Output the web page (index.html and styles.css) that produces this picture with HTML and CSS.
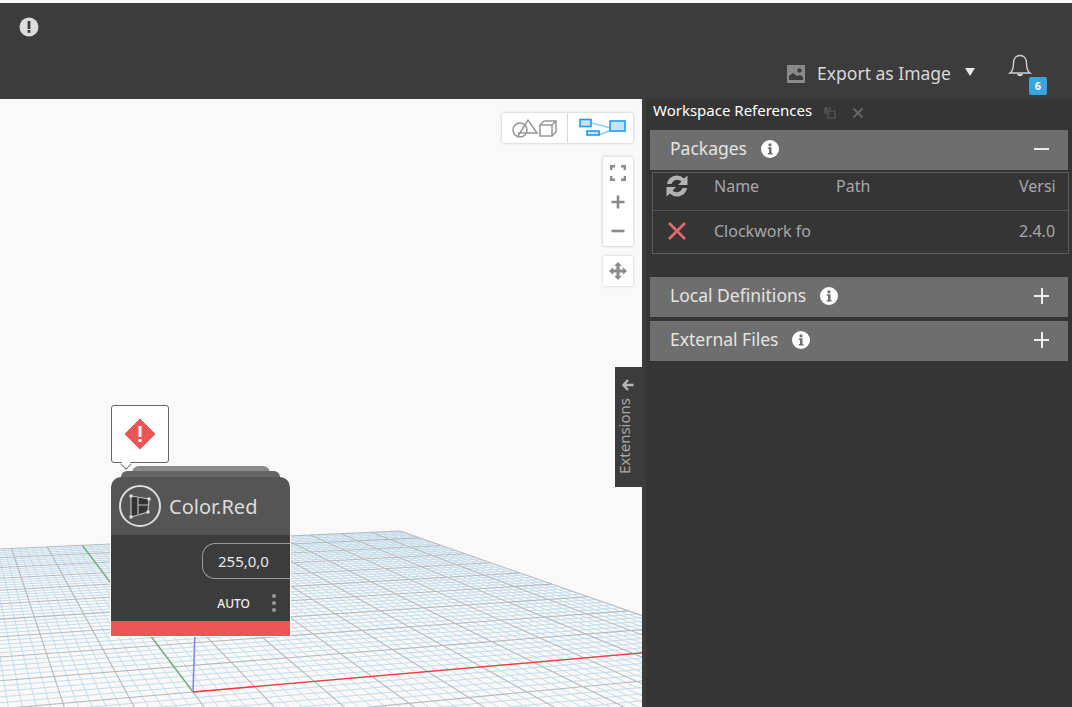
FILE: index.html
```html
<!DOCTYPE html>
<html lang="en">
  <head>
    <meta charset="UTF-8" />
    <title>Workspace References</title>
    <link rel="stylesheet" href="styles.css">
  </head>
  <body>
    <div class="app">
      <header class="topbar">
        <svg class="alert" width="20" height="20" viewBox="0 0 20 20">
          <circle cx="10" cy="10" r="9.5" fill="#dcdcdc" />
          <rect x="8.6" y="4" width="2.8" height="8" fill="#3c3c3c" />
          <rect x="8.6" y="13" width="2.8" height="2.8" fill="#3c3c3c" />
        </svg>
        <div class="actions">
          <svg class="export-icon" width="18" height="18" viewBox="0 0 18 18">
            <rect width="18" height="18" fill="#8a8a8a" />
            <circle cx="12.5" cy="5.5" r="2.2" fill="#3c3c3c" />
            <path d="M2 15 L2 11 L6 8 L10 11 L13 10 L16 12 L16 15 Z" fill="#3c3c3c" />
          </svg>
          <span class="export-text">Export as Image</span>
          <span class="caret"></span>
          <div class="bell">
            <svg width="24" height="26" viewBox="0 0 24 26">
              <path d="M2 20 C5 18 5.500 15 5.500 10 C5.500 5 8.500 2.500 12 2.500 C15.500 2.500 18.500 5 18.500 10 C18.500 15 19 18 22 20 Z" fill="none" stroke="#cfcfcf" stroke-width="1.400" />
              <path d="M9 21 C9.500 24 14.500 24 15 21 Z" fill="#cfcfcf" />
            </svg>
            <span class="badge">6</span>
          </div>
        </div>
      </header>

      <main class="main">
        <section class="canvas">
          <svg id="grid" class="grid" width="642" height="608"></svg>

          <div class="view-toggle">
            <button class="toggle-btn">
              <svg width="50" height="20" viewBox="0 0 50 20">
                <circle cx="10" cy="12" r="7" fill="none" stroke="#969696" stroke-width="1.500" />
                <path d="M8 18 L18 2 L27 15 L8 15" fill="none" stroke="#969696" stroke-width="1.500" />
                <path d="M30 7 H42 V18 H30 Z M30 7 L34 3 H46 V14 L42 18 M42 7 L46 3" fill="none" stroke="#969696" stroke-width="1.500" />
              </svg>
            </button>
            <button class="toggle-btn graph-btn">
              <svg width="48" height="20" viewBox="0 0 48 20">
                <path d="M12 5 L32 10 M20 17 L32 12" stroke="#8fcdf7" stroke-width="1.500" />
                <rect x="1" y="1.500" width="11" height="7" fill="#c5e3fb" stroke="#1e9cf5" stroke-width="1.600" />
                <rect x="8" y="13" width="12" height="4" fill="#c5e3fb" stroke="#1e9cf5" stroke-width="1.600" />
                <rect x="31" y="3" width="15" height="10" fill="#c5e3fb" stroke="#1e9cf5" stroke-width="1.600" />
              </svg>
            </button>
          </div>

          <div class="zoom-box">
            <button class="tool-btn">
              <svg width="16" height="16" viewBox="0 0 16 16">
                <path d="M1.200 5 V1.200 H5 M11 1.200 H14.800 V5 M14.800 11 V14.800 H11 M5 14.800 H1.200 V11" fill="none" stroke="#8a8a8a" stroke-width="2.400" />
              </svg>
            </button>
            <button class="tool-btn">
              <svg width="14" height="14" viewBox="0 0 14 14">
                <path d="M7 0.500 V13.500 M0.500 7 H13.500" stroke="#8a8a8a" stroke-width="2.600" />
              </svg>
            </button>
            <button class="tool-btn">
              <svg width="14" height="14" viewBox="0 0 14 14">
                <path d="M0.500 7 H13.500" stroke="#8a8a8a" stroke-width="2.600" />
              </svg>
            </button>
          </div>

          <div class="pan-box">
            <svg width="18" height="18" viewBox="0 0 18 18">
              <path d="M9 0 L12.800 4 H10.600 V7.400 H14 V5.200 L18 9 L14 12.800 V10.600 H10.600 V14 H12.800 L9 18 L5.200 14 H7.400 V10.600 H4 V12.800 L0 9 L4 5.200 V7.400 H7.400 V4 H5.200 Z" fill="#8a8a8a" />
            </svg>
          </div>

          <div class="warning">
            <svg width="32" height="32" viewBox="0 0 32 32">
              <path d="M16 1 L31 16 L16 31 L1 16 Z" fill="#eb5555" stroke="#eb5555" stroke-linejoin="round" />
              <rect x="14.500" y="8" width="3" height="11" fill="#fff" />
              <rect x="14.500" y="21" width="3" height="3" fill="#fff" />
            </svg>
          </div>

          <div class="node">
            <div class="node-stack stack-back"></div>
            <div class="node-stack stack-mid"></div>
            <div class="node-head">
              <svg width="44" height="44" viewBox="0 0 44 44">
                <circle cx="22" cy="22" r="20" fill="none" stroke="#dcdcdc" stroke-width="2" />
                <path d="M13 12 L31 15 L30 28 L13 33 Z" fill="#333" stroke="#bdbdbd" stroke-width="1.200" />
                <path d="M20 14 V30 M20 21 H30" fill="none" stroke="#bdbdbd" stroke-width="1.200" />
                <circle cx="13" cy="12" r="1.800" fill="#dcdcdc" />
                <circle cx="31" cy="15" r="1.800" fill="#dcdcdc" />
                <circle cx="30" cy="28" r="1.800" fill="#dcdcdc" />
                <circle cx="13" cy="33" r="1.800" fill="#dcdcdc" />
              </svg>
              <span class="node-name">Color.Red</span>
            </div>
            <div class="node-body">
              <div class="node-value">255,0,0</div>
              <div class="node-foot">
                <span class="node-auto">AUTO</span>
                <span class="node-dots"><i></i><i></i><i></i></span>
              </div>
            </div>
            <div class="node-state"></div>
          </div>

          <div class="ext-tab">
            <svg width="12" height="12" viewBox="0 0 12 12">
              <path d="M6 1 L1.500 6 L6 11 M2 6 H11.500" fill="none" stroke="#b5b5b5" stroke-width="2.400" />
            </svg>
            <span class="ext-label">Extensions</span>
          </div>
        </section>

        <aside class="sidebar">
          <div class="side-title">
            <span class="side-name">Workspace References</span>
            <svg width="12" height="12" viewBox="0 0 12 12">
              <path d="M1 1 H6 V3 M1 1 V6 H3 M4 4 H11 V11 H4 Z M1 1 L5 5" fill="none" stroke="#5c5c5c" stroke-width="1.200" />
            </svg>
            <svg width="12" height="12" viewBox="0 0 12 12">
              <path d="M1.500 1.500 L10.500 10.500 M10.500 1.500 L1.500 10.500" stroke="#666" stroke-width="2" />
            </svg>
          </div>

          <div class="section-head">
            <span class="section-name">Packages</span>
            <svg class="info" width="18" height="18" viewBox="0 0 18 18">
              <circle cx="9" cy="9" r="9" fill="#fff" />
              <circle cx="9" cy="4.800" r="1.600" fill="#6e6e6e" />
              <path d="M6.800 7.300 H10.500 V13 H11.500 V14.500 H6.800 V13 H8 V8.800 H6.800 Z" fill="#6e6e6e" />
            </svg>
            <span class="toggle-sign minus"></span>
          </div>

          <div class="pkg-table">
            <div class="pkg-row pkg-header">
              <span class="pkg-icon">
                <svg width="24" height="24" viewBox="0 0 24 24">
                  <path d="M2 10 A10 10 0 0 1 19 4.500 L22.500 1.500 V11 H13 L16.500 7.500 A6 6 0 0 0 6.500 10 Z" fill="#b3b3b3" />
                  <path d="M22 14 A10 10 0 0 1 5 19.500 L1.500 22.500 V13 H11 L7.500 16.500 A6 6 0 0 0 17.500 14 Z" fill="#b3b3b3" />
                </svg>
              </span>
              <span class="pkg-name">Name</span>
              <span class="pkg-path">Path</span>
              <span class="pkg-version">Versi</span>
            </div>
            <div class="pkg-row pkg-item">
              <span class="pkg-icon">
                <svg width="20" height="20" viewBox="0 0 20 20">
                  <path d="M2 2 L18 18 M18 2 L2 18" stroke="#e06a6a" stroke-width="2.800" />
                </svg>
              </span>
              <span class="pkg-name">Clockwork fo</span>
              <span class="pkg-path"></span>
              <span class="pkg-version">2.4.0</span>
            </div>
          </div>

          <div class="section-head section-gap">
            <span class="section-name">Local Definitions</span>
            <svg class="info" width="18" height="18" viewBox="0 0 18 18">
              <circle cx="9" cy="9" r="9" fill="#fff" />
              <circle cx="9" cy="4.800" r="1.600" fill="#6e6e6e" />
              <path d="M6.800 7.300 H10.500 V13 H11.500 V14.500 H6.800 V13 H8 V8.800 H6.800 Z" fill="#6e6e6e" />
            </svg>
            <span class="toggle-sign plus"></span>
          </div>
          <div class="section-head">
            <span class="section-name">External Files</span>
            <svg class="info" width="18" height="18" viewBox="0 0 18 18">
              <circle cx="9" cy="9" r="9" fill="#fff" />
              <circle cx="9" cy="4.800" r="1.600" fill="#6e6e6e" />
              <path d="M6.800 7.300 H10.500 V13 H11.500 V14.500 H6.800 V13 H8 V8.800 H6.800 Z" fill="#6e6e6e" />
            </svg>
            <span class="toggle-sign plus"></span>
          </div>
        </aside>
      </main>
    </div>
    <script src="grid.js"></script>
  </body>
</html>
```

FILE: styles.css
```css
* {
  box-sizing: border-box;
}
html,
body {
  margin: 0;
  height: 100%;
  overflow: hidden;
}
body {
  background: #f9f9f9;
  font-family: "Noto Sans", "Open Sans", sans-serif;
}
.app {
  display: flex;
  flex-direction: column;
  height: 707px;
  padding-top: 3px;
}
.topbar {
  height: 96px;
  background: #3c3c3c;
  display: flex;
  justify-content: space-between;
  flex-shrink: 0;
}
.alert {
  margin: 14px 0 0 19px;
}
.actions {
  align-self: flex-start;
  display: flex;
  align-items: center;
  margin-top: 50px;
  margin-right: 21px;
  height: 40px;
}
.export-icon {
  margin-top: 2px;
  margin-right: 12px;
}
.export-text {
  font-size: 17.5px;
  color: #d8d8d8;
}
.caret {
  width: 0;
  height: 0;
  margin: 0 33px 2px 14px;
  border-left: 5px solid transparent;
  border-right: 5px solid transparent;
  border-top: 8px solid #e8e8e8;
}
.bell {
  position: relative;
  width: 43px;
  height: 40px;
}
.bell svg {
  display: block;
}
.badge {
  position: absolute;
  left: 21px;
  top: 24px;
  width: 18px;
  height: 18px;
  border-radius: 2px;
  background: #38a5dc;
  color: #fff;
  font-size: 11px;
  font-weight: 700;
  line-height: 18px;
  text-align: center;
}
.main {
  flex: 1;
  display: flex;
  min-height: 0;
}
.canvas {
  position: relative;
  width: 642px;
  flex-shrink: 0;
  background: #f9f9f9;
  overflow: hidden;
}
.grid {
  position: absolute;
  left: 0;
  top: 0;
}
.view-toggle {
  position: absolute;
  top: 14px;
  right: 9px;
  display: flex;
  width: 131px;
  height: 30px;
  background: #fff;
  border-radius: 2px;
  box-shadow: 0 0 3px rgba(0, 0, 0, 0.25);
}
.toggle-btn {
  width: 65px;
  flex: none;
  border: 0;
  padding: 0;
  background: none;
  display: flex;
  align-items: center;
  justify-content: center;
}
.toggle-btn + .toggle-btn {
  width: 66px;
  border-left: 1px solid #d4d4d4;
}
.graph-btn {
  padding-left: 4px;
}
.zoom-box {
  position: absolute;
  top: 58px;
  right: 9px;
  width: 30px;
  height: 89px;
  background: #fff;
  border-radius: 2px;
  box-shadow: 0 0 3px rgba(0, 0, 0, 0.25);
  display: flex;
  flex-direction: column;
  padding: 1px 0;
}
.tool-btn {
  flex: 1;
  border: 0;
  padding: 0;
  background: none;
  display: flex;
  align-items: center;
  justify-content: center;
}
.pan-box {
  position: absolute;
  top: 157px;
  right: 9px;
  width: 30px;
  height: 30px;
  background: #fff;
  border-radius: 2px;
  box-shadow: 0 0 3px rgba(0, 0, 0, 0.2);
  display: flex;
  align-items: center;
  justify-content: center;
}
.warning {
  position: absolute;
  left: 111px;
  top: 306px;
  width: 58px;
  height: 58px;
  background: #fff;
  border: 1px solid #666;
  border-radius: 3px;
  display: flex;
  align-items: center;
  justify-content: center;
}
.warning::after {
  content: "";
  position: absolute;
  left: 9px;
  bottom: -7px;
  width: 9px;
  height: 9px;
  background: #fff;
  border-right: 1px solid #666;
  border-bottom: 1px solid #666;
  transform: rotate(45deg) scale(0.8);
}
.node {
  position: absolute;
  left: 110px;
  top: 377px;
  width: 181px;
  padding: 1px;
  background: #fff;
  border-radius: 11px 11px 0 0;
}
.node-stack {
  position: absolute;
  border-radius: 7px 7px 0 0;
}
.stack-back {
  left: 22px;
  right: 21px;
  top: -10px;
  height: 12px;
  background: #8a8a8a;
}
.stack-mid {
  left: 11px;
  right: 11px;
  top: -5px;
  height: 6px;
  background: #666;
}
.node-head {
  position: relative;
  height: 58px;
  background: #555;
  border-radius: 10px 10px 0 0;
  display: flex;
  align-items: center;
  padding-left: 7px;
}
.node-name {
  margin-left: 7px;
  font-size: 20px;
  color: #dcdcdc;
}
.node-body {
  position: relative;
  height: 86px;
  background: #3c3c3c;
  padding-top: 8px;
}
.node-value {
  margin-left: 91px;
  height: 36px;
  border: 1px solid #999;
  border-right: 0;
  border-radius: 13px 0 0 13px;
  padding-left: 15px;
  font-size: 15px;
  line-height: 34px;
  color: #e8e8e8;
}
.node-foot {
  display: flex;
  align-items: center;
  justify-content: flex-end;
  margin-top: 14px;
  height: 20px;
  padding-right: 14px;
}
.node-auto {
  font-size: 12px;
  font-weight: 500;
  color: #f0f0f0;
}
.node-dots {
  display: flex;
  flex-direction: column;
  gap: 3px;
  margin-left: 22px;
}
.node-dots i {
  width: 4px;
  height: 4px;
  border-radius: 50%;
  background: #999;
}
.node-state {
  position: relative;
  height: 15px;
  background: #eb5555;
}
.ext-tab {
  position: absolute;
  left: 615px;
  top: 268px;
  width: 27px;
  height: 120px;
  background: #3c3c3c;
  display: flex;
  flex-direction: column;
  align-items: flex-start;
  padding-top: 12px;
}
.ext-tab svg {
  margin-left: 7px;
}
.ext-label {
  margin-top: 7px;
  writing-mode: vertical-rl;
  transform: rotate(180deg);
  font-size: 15px;
  line-height: 18px;
  color: #a8a8a8;
}
.sidebar {
  flex: 1;
  background: #353535;
  border-left: 4px solid #3c3c3c;
  padding: 0 4px 0 4px;
}
.side-title {
  display: flex;
  align-items: center;
  height: 31px;
  padding: 0 0 9px 3px;
}
.side-name {
  font-size: 15px;
  color: #fff;
  margin-right: 12px;
}
.side-title svg {
  margin-top: 6px;
  margin-right: 16px;
}
.section-head {
  display: flex;
  align-items: center;
  height: 40px;
  background: #6e6e6e;
  padding: 0 19px 2px 20px;
  margin-bottom: 4px;
}
.section-gap {
  margin-top: 23px;
}
.section-name {
  font-size: 17.5px;
  color: #e4e4e4;
  margin-top: -2px;
}
.info {
  margin-left: 14px;
}
.toggle-sign {
  position: relative;
  width: 15px;
  height: 16px;
  margin-left: auto;
}
.toggle-sign::before,
.plus::after {
  content: "";
  position: absolute;
  background: #eee;
}
.toggle-sign::before {
  left: 0;
  top: 7px;
  width: 15px;
  height: 2px;
}
.plus::after {
  left: 6.500px;
  top: 0;
  width: 2px;
  height: 16px;
}
.pkg-table {
  margin: -2px -1px 0 2px;
  border: 1px solid #5c5c5c;
}
.pkg-row {
  display: grid;
  grid-template-columns: 61px 122px 1fr 37px;
  align-items: center;
  padding-right: 12px;
  font-size: 16px;
  color: #a8a8a8;
  overflow: hidden;
}
.pkg-header {
  height: 38px;
  border-bottom: 1px solid #555;
  padding-bottom: 12px;
}
.pkg-item {
  height: 42px;
  padding-bottom: 2px;
}
.pkg-icon {
  display: flex;
  justify-content: center;
  padding-right: 13px;
}
.pkg-version {
  white-space: nowrap;
  overflow: hidden;
}
```

FILE: grid.js
```js
// ground plane grid, drawn from the two vanishing points of the view
const svg = document.getElementById("grid");
const NS = "http://www.w3.org/2000/svg";
const TOP = 99; // the canvas starts here on the page

function project(u, v) {
  const a = 0.1739 * (u / 50);
  const b = 0.8614 * (v / 50);
  const w = 1 + a + b;
  return [(193 + 3800 * a - 46 * b) / w, (692 + 378 * a + 375 * b) / w - TOP];
}

function line(p, q, color, width) {
  const el = document.createElementNS(NS, "line");
  el.setAttribute("x1", p[0].toFixed(2));
  el.setAttribute("y1", p[1].toFixed(2));
  el.setAttribute("x2", q[0].toFixed(2));
  el.setAttribute("y2", q[1].toFixed(2));
  el.setAttribute("stroke", color);
  el.setAttribute("stroke-width", width);
  svg.appendChild(el);
}

const MIN_V = -20;
const minor = "#c5dcea";
const major = "#b0bac1";

for (let pass = 0; pass < 2; pass++) {
  for (let i = -50; i <= 50; i++) {
    const isMajor = i % 5 === 0;
    if (isMajor !== (pass === 1)) continue;
    const color = isMajor ? major : minor;
    const width = isMajor ? 1.1 : 1;
    line(project(i, MIN_V), project(i, 50), color, width);
    if (i >= MIN_V) line(project(-50, i), project(50, i), color, width);
  }
}

line(project(0, 0), project(50, 0), "#f03a3a", 1.3);
line(project(0, 0), project(0, 50), "#74ad74", 1.3);
line([193, 692 - TOP], [195, 630 - TOP], "#8080f0", 1.5);
```
